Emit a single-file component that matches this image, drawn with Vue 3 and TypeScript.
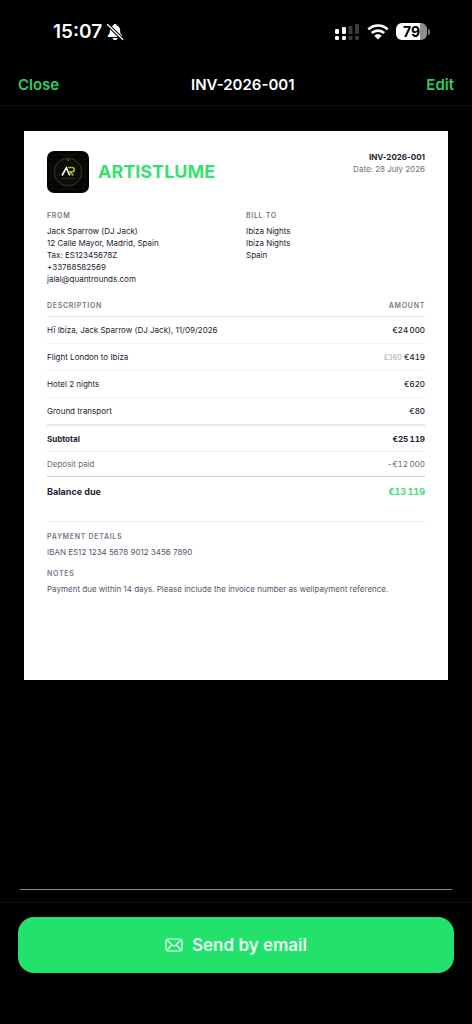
<script setup lang="ts">
interface LineItem {
  description: string
  original?: string
  amount: string
}

const invoiceNumber = 'INV-2026-001'

const from: string[] = [
  'Jack Sparrow (DJ Jack)',
  '12 Calle Mayor, Madrid, Spain',
  'Tax: ES12345678Z',
  '+33768582569',
  'jalal@quantrounds.com',
]

const billTo: string[] = ['Ibiza Nights', 'Ibiza Nights', 'Spain']

const items: LineItem[] = [
  { description: 'Hï Ibiza, Jack Sparrow (DJ Jack), 11/09/2026', amount: '€24\u202f000' },
  { description: 'Flight London to Ibiza', original: '£360', amount: '€419' },
  { description: 'Hotel 2 nights', amount: '€620' },
  { description: 'Ground transport', amount: '€80' },
]

const dialTicks: number[] = Array.from({ length: 36 }, (_, i) => i * 10)
</script>

<template>
  <div class="screen">
    <div class="status">
      <div class="status-left">
        <span class="time">15:07</span>
        <svg class="bell" viewBox="0 0 18 18" aria-hidden="true">
          <path d="M9 1C8 1 7.300 1.700 7.200 2.600C4.900 3.400 3.900 5.300 3.900 7.500C3.900 10.500 3.200 11.200 1.900 12.500C1.300 13.200 1.700 14 2.500 14H15.500C16.300 14 16.700 13.200 16.100 12.500C14.800 11.200 14.100 10.500 14.100 7.500C14.100 5.300 13.100 3.400 10.800 2.600C10.700 1.700 10 1 9 1Z" fill="#fff" />
          <path d="M6.500 15H11.500C11.200 16.400 10.300 17.100 9 17.100S6.800 16.400 6.500 15Z" fill="#fff" />
          <path d="M1.500 1.500L16.800 16.500" stroke="#000" stroke-width="3.400" />
          <path d="M1.500 1.500L16.800 16.500" stroke="#fff" stroke-width="1.300" stroke-linecap="round" />
        </svg>
      </div>
      <div class="status-right">
        <svg class="signal" viewBox="0 0 25 18" aria-hidden="true">
          <g fill="#fff">
            <rect x="0" y="6" width="4" height="5" rx="1.200" />
            <rect x="7" y="4" width="4" height="7" rx="1.200" />
            <rect x="0" y="13" width="4" height="4" rx="1.200" />
            <rect x="7" y="13" width="4" height="4" rx="1.200" />
          </g>
          <g fill="#3c3c3c">
            <rect x="13.500" y="3" width="4" height="8" rx="1.200" />
            <rect x="20" y="1" width="4" height="10" rx="1.200" />
            <rect x="13.500" y="13" width="4" height="4" rx="1.200" />
            <rect x="20" y="13" width="4" height="4" rx="1.200" />
          </g>
        </svg>
        <svg class="wifi" viewBox="0 0 22 16" aria-hidden="true">
          <g fill="none" stroke="#fff" stroke-width="2.700">
            <path d="M1.300 5.400C6.700 0.200 15.300 0.200 20.700 5.400" />
            <path d="M4.800 9.100C8.300 5.800 13.700 5.800 17.200 9.100" />
          </g>
          <path d="M7.300 11.700C9.400 9.800 12.600 9.800 14.700 11.700L11 15.500Z" fill="#fff" />
        </svg>
        <div class="battery"><span class="battery-body">79</span><i class="battery-tip"></i></div>
      </div>
    </div>

    <header class="nav">
      <button type="button" class="nav-button">Close</button>
      <h1>{{ invoiceNumber }}</h1>
      <button type="button" class="nav-button">Edit</button>
    </header>

    <main>
      <article class="paper">
        <div class="masthead">
          <div class="brand">
            <svg class="logo" viewBox="0 0 42 42" role="img" aria-label="Artistlume logo">
              <rect width="42" height="42" rx="7" fill="#050604" />
              <rect x="4" y="4" width="34" height="34" rx="5" fill="none" stroke="#1b1d16" stroke-width="0.600" />
              <circle cx="21" cy="21" r="13.500" fill="#0c0d09" stroke="#5b6020" stroke-width="0.500" />
              <g stroke="#50551f" stroke-width="0.500">
                <path v-for="tick in dialTicks" :key="tick" d="M21 5.800V7.200" :transform="`rotate(${tick} 21 21)`" />
              </g>
              <path d="M21 8V10" stroke="#9dae26" stroke-width="0.800" />
              <path d="M15 24.500L19.300 16.800L22.800 24.500" fill="none" stroke="#f2f2ef" stroke-width="1.700" />
              <path d="M20.800 16.500H25C28.200 16.500 28.200 20.800 25 20.800H23L26.300 24.500" fill="none" stroke="#99b92a" stroke-width="1.600" />
              <path d="M15 27.300H28" stroke="#70736a" stroke-width="0.500" stroke-dasharray="1 0.500" />
            </svg>
            <strong class="brand-name">ARTISTLUME</strong>
          </div>
          <div class="meta">
            <strong>{{ invoiceNumber }}</strong>
            <span>Date: 28 July 2026</span>
          </div>
        </div>

        <div class="parties">
          <section>
            <h2>FROM</h2>
            <p v-for="line in from" :key="line">{{ line }}</p>
          </section>
          <section>
            <h2>BILL TO</h2>
            <p v-for="(line, i) in billTo" :key="i">{{ line }}</p>
          </section>
        </div>

        <table>
          <thead>
            <tr>
              <th scope="col">DESCRIPTION</th>
              <th scope="col">AMOUNT</th>
            </tr>
          </thead>
          <tbody>
            <tr v-for="item in items" :key="item.description">
              <td>{{ item.description }}</td>
              <td><span v-if="item.original" class="original">{{ item.original }}</span> {{ item.amount }}</td>
            </tr>
          </tbody>
          <tfoot>
            <tr class="subtotal">
              <th scope="row">Subtotal</th>
              <td>€25&#8239;119</td>
            </tr>
            <tr class="deposit">
              <th scope="row">Deposit paid</th>
              <td>-€12&#8239;000</td>
            </tr>
            <tr class="balance">
              <th scope="row">Balance due</th>
              <td>€13&#8239;119</td>
            </tr>
          </tfoot>
        </table>

        <div class="details">
          <section>
            <h2>PAYMENT DETAILS</h2>
            <p>IBAN ES12 1234 5678 9012 3456 7890</p>
          </section>
          <section>
            <h2>NOTES</h2>
            <p>Payment due within 14 days. Please include the invoice number as wellpayment reference.</p>
          </section>
        </div>
      </article>
    </main>

    <div class="divider"></div>

    <footer>
      <button type="button" class="send">
        <svg class="mail" viewBox="0 0 18 14" aria-hidden="true">
          <g fill="none" stroke="currentColor" stroke-width="1.200" stroke-linejoin="round" stroke-linecap="round">
            <rect x="1" y="1" width="16" height="12" rx="2" />
            <path d="M2 2L7.400 7.200Q9 8.600 10.600 7.200L16 2M2 12L6.700 7M16 12L11.300 7" />
          </g>
        </svg>
        <span>Send by email</span>
      </button>
    </footer>
  </div>
</template>

<style>
body {
  margin: 0;
  background: #000;
}
</style>

<style scoped>
.screen {
  display: flex;
  flex-direction: column;
  min-height: 100vh;
  box-sizing: border-box;
  background: #000;
  color: #fff;
  font-family: Inter, "Liberation Sans", sans-serif;
}

h1,
h2,
p {
  margin: 0;
}

button {
  padding: 0;
  border: 0;
  background: none;
  font-family: inherit;
  cursor: pointer;
}

.status {
  display: flex;
  align-items: center;
  justify-content: space-between;
  height: 63px;
  padding: 0 42px 0 53px;
}

.status-left,
.status-right {
  display: flex;
  align-items: center;
}

.status-left {
  gap: 4px;
}

.time {
  font-size: 19px;
  font-weight: 600;
}

.bell {
  width: 18px;
  height: 18px;
}

.status-right {
  gap: 7px;
}

.signal {
  width: 25px;
  height: 18px;
}

.wifi {
  width: 22px;
  height: 16px;
}

.battery {
  display: flex;
  align-items: center;
  gap: 1px;
}

.battery-body {
  width: 31px;
  border-radius: 6px;
  background: linear-gradient(90deg, #fff 79%, #8e8e8e 79%);
  color: #000;
  font-size: 14px;
  font-weight: 700;
  line-height: 17px;
  text-align: center;
}

.battery-tip {
  width: 2px;
  height: 6px;
  border-radius: 0 2px 2px 0;
  background: #777;
}

.nav {
  display: flex;
  align-items: center;
  justify-content: space-between;
  height: 42px;
  padding: 0 18px;
  border-bottom: 1px solid #0c0c0c;
}

h1 {
  font-size: 15px;
  font-weight: 600;
}

.nav-button {
  color: #2bd066;
  font-size: 15px;
  font-weight: 600;
}

main {
  flex: 1;
  padding: 25px 24px;
}

.paper {
  box-sizing: border-box;
  aspect-ratio: 17 / 22;
  padding: 20px 23px;
  background: #fff;
  color: #1d2330;
  font-size: 8px;
  line-height: 12px;
}

.masthead {
  display: flex;
  justify-content: space-between;
}

.brand {
  display: flex;
  align-items: center;
  gap: 9px;
}

.logo {
  width: 42px;
  height: 42px;
}

.brand-name {
  color: #37e072;
  font-size: 18px;
  font-weight: 700;
  line-height: 24px;
}

.meta {
  display: flex;
  flex-direction: column;
  align-items: flex-end;
  color: #6a7180;
}

.meta strong {
  color: #1d2330;
  font-weight: 700;
}

h2,
thead th {
  color: #737986;
  font-size: 7px;
  font-weight: 600;
  letter-spacing: 0.1em;
  line-height: 10px;
}

.parties {
  display: grid;
  grid-template-columns: 1fr 1fr;
  gap: 20px;
  margin-top: 18px;
}

.parties h2 {
  margin-bottom: 4px;
}

table {
  width: 100%;
  margin-top: 16px;
  border-collapse: separate;
  border-spacing: 0;
}

th,
td {
  padding: 0;
  text-align: left;
  font-weight: 400;
}

th:last-child,
td:last-child {
  text-align: right;
  font-variant-numeric: tabular-nums;
}

thead th {
  padding-bottom: 5px;
  border-bottom: 1px solid #e2e4e8;
  font-weight: 600;
}

tbody td {
  padding: 7px 0;
  border-bottom: 1px solid #f1f2f4;
}

tbody td:last-child {
  font-weight: 500;
}

tbody tr:last-child td {
  border-bottom: 2px solid #e6e8eb;
}

.original {
  color: #a3a8b2;
  font-size: 7px;
  font-weight: 400;
  line-height: 8px;
}

.subtotal > * {
  padding: 7px 0 6px;
  border-bottom: 1px solid #f1f2f4;
  font-weight: 700;
}

.deposit > * {
  padding: 6px 0;
  border-bottom: 1px solid #cfd2d7;
  color: #646b79;
}

.balance > * {
  padding: 9px 0 0;
  font-size: 9px;
  font-weight: 700;
}

.balance td {
  color: #43db78;
}

.details {
  display: grid;
  gap: 11px;
  margin-top: 23px;
  padding-top: 10px;
  border-top: 1px solid #ebecef;
  color: #505866;
}

.details h2 {
  margin-bottom: 4px;
}

.divider {
  height: 1px;
  margin: 0 20px 12px;
  background: #8b8f8c;
}

footer {
  padding: 14px 18px 51px;
  border-top: 1px solid #0c0c0c;
}

.send {
  display: flex;
  align-items: center;
  justify-content: center;
  gap: 9px;
  width: 100%;
  height: 56px;
  border-radius: 16px;
  background: #22e26c;
  color: #e9fff1;
  font-size: 17px;
  font-weight: 600;
}

.mail {
  width: 18px;
  height: 14px;
}
</style>
